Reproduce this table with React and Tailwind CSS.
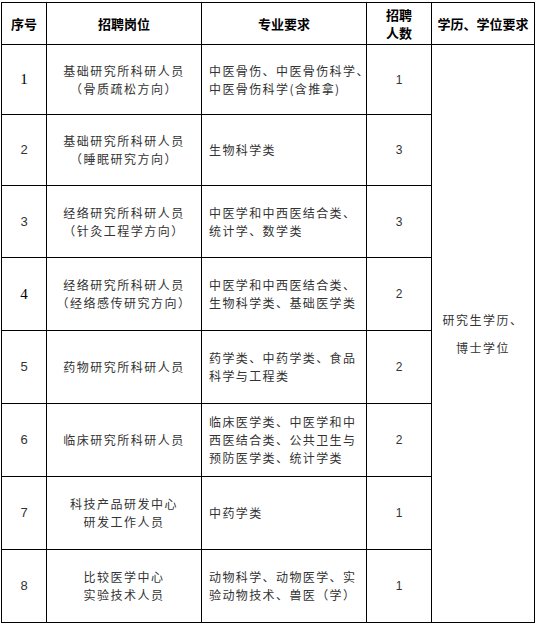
import React from "react";

const F = { fontFamily: '"Noto Sans CJK SC", "Noto Sans", sans-serif' };

const rows = [
  { no: "1", serif: true, pos: ["基础研究所科研人员", "（骨质疏松方向）"], req: ["中医骨伤、中医骨伤科学、", "中医骨伤科学(含推拿)"], n: "1" },
  { no: "2", pos: ["基础研究所科研人员", "（睡眠研究方向）"], req: ["生物科学类"], n: "3" },
  { no: "3", pos: ["经络研究所科研人员", "（针灸工程学方向）"], req: ["中医学和中西医结合类、", "统计学、数学类"], n: "3" },
  { no: "4", serif: true, pos: ["经络研究所科研人员", "（经络感传研究方向）"], req: ["中医学和中西医结合类、", "生物科学类、基础医学类"], n: "2" },
  { no: "5", pos: ["药物研究所科研人员"], req: ["药学类、中药学类、食品", "科学与工程类"], n: "2" },
  { no: "6", pos: ["临床研究所科研人员"], req: ["临床医学类、中医学和中", "西医结合类、公共卫生与", "预防医学类、统计学类"], n: "2" },
  { no: "7", pos: ["科技产品研发中心", "研发工作人员"], req: ["中药学类"], n: "1" },
  { no: "8", pos: ["比较医学中心", "实验技术人员"], req: ["动物科学、动物医学、实", "验动物技术、兽医（学）"], n: "1" },
];

const cell = "border-r border-b border-black flex items-center";
const head = `${cell} justify-center text-[13px] font-bold text-black`;

export default function App() {
  return (
    <div className="bg-white w-[537px] h-[625px] pt-[2px] pl-[1px]" style={F}>
      <div className="grid w-fit border-l border-t border-black grid-cols-[45px_155px_165px_65px_103px] grid-rows-[42px_70px_71px_72px_73px_73px_73px_73px_73px] text-[#333]">
        <div className={head}>序号</div>
        <div className={head}>招聘岗位</div>
        <div className={head}>专业要求</div>
        <div className={`${head} flex-col leading-[18px]`}>
          <div>招聘</div>
          <div>人数</div>
        </div>
        <div className={`${head} whitespace-nowrap`}>学历、学位要求</div>
        {rows.map((r, i) => (
          <React.Fragment key={r.no}>
            <div
              className={`${cell} justify-center ${r.serif ? "text-[15px] text-black" : "text-[13px]"}`}
              style={{ fontFamily: r.serif ? '"Liberation Serif", serif' : '"Liberation Sans", sans-serif' }}
            >
              {r.no}
            </div>
            <div className={`${cell} justify-center`}>
              <div className="text-center text-[12px] leading-[18px] tracking-[1.5px] whitespace-nowrap">
                {r.pos.map((l) => (
                  <div key={l}>{l}</div>
                ))}
              </div>
            </div>
            <div className={`${cell} pl-[7px]`}>
              <div className="text-[12px] leading-[18px] tracking-[1.4px] whitespace-nowrap">
                {r.req.map((l) => (
                  <div key={l}>{l}</div>
                ))}
              </div>
            </div>
            <div className={`${cell} justify-center text-[12px]`} style={{ fontFamily: '"Liberation Sans", sans-serif' }}>
              {r.n}
            </div>
            {i === 0 && (
              <div className={`${cell} justify-center row-span-8`}>
                <div className="text-center text-[12px] leading-[28px] tracking-[1.5px]">
                  <div>研究生学历、</div>
                  <div>博士学位</div>
                </div>
              </div>
            )}
          </React.Fragment>
        ))}
      </div>
    </div>
  );
}
